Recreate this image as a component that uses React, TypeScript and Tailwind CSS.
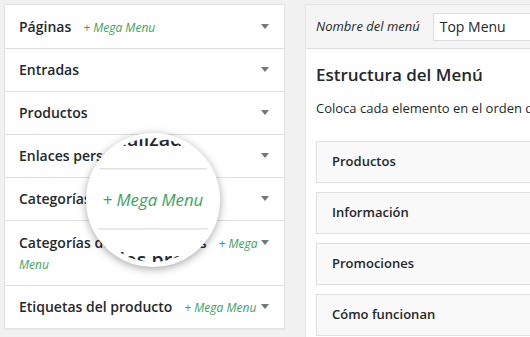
import React from 'react';

const sections = [
  { title: 'Páginas', mega: true, pad: 'pt-[11px] pb-[11px]' },
  { title: 'Entradas', mega: false, pad: 'pt-[10px] pb-[11px]' },
  { title: 'Productos', mega: false, pad: 'pt-[10px] pb-[11px]' },
  { title: 'Enlaces personalizados', mega: false, pad: 'pt-[10px] pb-[11px]' },
  { title: 'Categorías', mega: true, pad: 'pt-[10px] pb-[11px]' },
  { title: 'Categorías de los productos', mega: true, pad: 'pt-[11px] pb-[11px]' },
  { title: 'Etiquetas del producto', mega: true, pad: 'pt-[10px] pb-[11px]' },
];

const menuItems = ['Productos', 'Información', 'Promociones', 'Cómo funcionan'];

function Arrow() {
  return (
    <svg width="8" height="5" viewBox="0 0 8 5" className="block">
      <polygon points="0,0 8,0 4,5" fill="#72777c" />
    </svg>
  );
}

function SectionsPanel() {
  return (
    <div className="w-[281px] shrink-0 self-start bg-white border border-[#e2e2e2] shadow-[0_1px_1px_rgba(0,0,0,0.04)]">
      {sections.map((s, i) => (
        <div
          key={s.title}
          className={`flex items-start pl-[14px] pr-[15px] ${s.pad} ${i < sections.length - 1 ? 'border-b border-[#dfdfdf]' : ''}`}
        >
          <div className="flex-1 text-[14px] leading-[21px] font-semibold">
            {s.title}
            {s.mega && (
              <span className="ml-[12px] text-[12px] leading-none italic font-normal text-[#3ba35f]">+ Mega Menu</span>
            )}
          </div>
          <div className="h-[21px] flex items-center ml-[3px]">
            <Arrow />
          </div>
        </div>
      ))}
    </div>
  );
}

function Magnifier() {
  return (
    <div className="absolute left-[86px] top-[133px] w-[134px] h-[134px] rounded-full border-[5px] border-white bg-white overflow-hidden shadow-[0_2px_9px_rgba(0,0,0,0.35)]">
      <div className="absolute left-[-91px] top-[-138px] w-[530px] h-[337px]">
        <div className="pt-[4px] pl-[4px] flex origin-[103.5px_199.5px] scale-[1.4]">
          <SectionsPanel />
        </div>
      </div>
    </div>
  );
}

export default function App() {
  return (
    <div className="relative w-[530px] h-[337px] overflow-hidden bg-[#f1f1f1] font-['Open_Sans',sans-serif] text-[#23282d]">
      <div className="flex gap-[20px] pt-[4px] pl-[4px]">
        <SectionsPanel />
        <div className="w-[400px] h-[360px] shrink-0 bg-white border border-[#e5e5e5]">
          <div className="h-[44px] bg-[#f5f5f5] border-b border-[#dfdfdf] flex items-center pl-[10px] gap-[13px]">
            <span className="text-[13px] italic">Nombre del menú</span>
            <div className="h-[28px] flex-1 bg-white border border-[#dddddd] flex items-center pl-[6px] text-[14px]">
              Top Menu
            </div>
          </div>
          <div className="pl-[10px] pt-[14px]">
            <h2 className="text-[17px] leading-[24px] font-semibold">Estructura del Menú</h2>
            <p className="mt-[11px] text-[13px] leading-[20px] whitespace-nowrap">
              Coloca cada elemento en el orden que prefieras. Haz clic en la flecha
            </p>
            <div className="mt-[23px] flex flex-col gap-[9px]">
              {menuItems.map((m) => (
                <div
                  key={m}
                  className="h-[42px] bg-[#f9f9f9] border border-[#dfdfdf] flex items-center pl-[15px] text-[13px] font-semibold"
                >
                  {m}
                </div>
              ))}
            </div>
          </div>
        </div>
      </div>
      <Magnifier />
    </div>
  );
}
